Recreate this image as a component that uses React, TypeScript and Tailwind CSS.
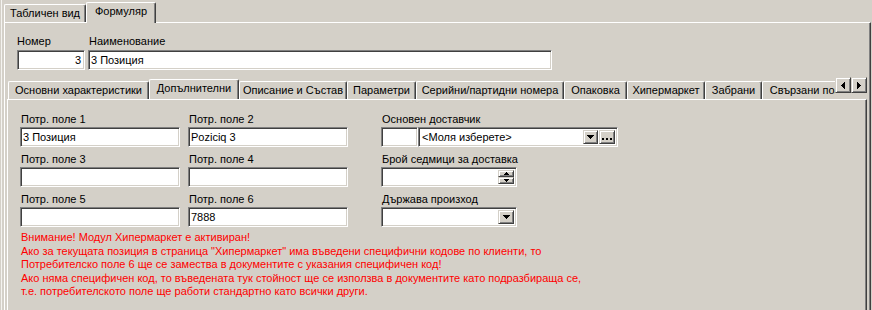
import React from "react";

const sunken =
  "border border-t-[#808080] border-l-[#808080] border-r-white border-b-white shadow-[inset_1px_1px_0_#404040,inset_-1px_-1px_0_#d4d0c8] bg-white";
const raised =
  "border border-t-[#d4d0c8] border-l-[#d4d0c8] border-r-[#404040] border-b-[#404040] shadow-[inset_1px_1px_0_#fff,inset_-1px_-1px_0_#808080] bg-[#d4d0c8]";

function DownArrow() {
  return (
    <svg width="7" height="4" viewBox="0 0 7 4" shapeRendering="crispEdges">
      <path d="M0 0h7v1h-1v1h-1v1h-1v1h-1v-1h-1v-1h-1v-1h-1z" fill="#000" />
    </svg>
  );
}

function SmallUp() {
  return (
    <svg width="5" height="3" viewBox="0 0 5 3" shapeRendering="crispEdges">
      <path d="M2 0h1v1h1v1h1v1h-5v-1h1v-1h1z" fill="#000" />
    </svg>
  );
}
function SmallDown() {
  return (
    <svg width="5" height="3" viewBox="0 0 5 3" shapeRendering="crispEdges">
      <path d="M0 0h5v1h-1v1h-1v1h-1v-1h-1v-1h-1z" fill="#000" />
    </svg>
  );
}
function LeftArrow() {
  return (
    <svg width="4" height="7" viewBox="0 0 4 7" shapeRendering="crispEdges">
      <path d="M3 0h1v7h-1v-1h-1v-1h-1v-1h-1v-1h1v-1h1v-1h1z" fill="#000" />
    </svg>
  );
}
function RightArrow() {
  return (
    <svg width="4" height="7" viewBox="0 0 4 7" shapeRendering="crispEdges">
      <path d="M0 0h1v1h1v1h1v1h1v1h-1v1h-1v1h-1v1h-1z" fill="#000" />
    </svg>
  );
}

function Label({ children, className = "" }: { children: React.ReactNode; className?: string }) {
  return <div className={"h-[13px] leading-[13px] whitespace-nowrap " + className}>{children}</div>;
}

function Input({ w, value = "", right = false }: { w: string; value?: string; right?: boolean }) {
  return (
    <div
      className={
        sunken +
        " h-[20px] mt-[1px] flex items-center whitespace-nowrap leading-[14px] " +
        w +
        (right ? " justify-end pr-[3px]" : " pl-[2px]")
      }
    >
      {value}
    </div>
  );
}

function Field({ label, value }: { label: string; value?: string }) {
  return (
    <div className="flex flex-col">
      <Label className="pl-[1px]">{label}</Label>
      <Input w="w-[160px]" value={value} />
    </div>
  );
}

const innerTabs: { label: string; w: string; selected?: boolean }[] = [
  { label: "Основни характеристики", w: "w-[141px]" },
  { label: "Допълнителни", w: "w-[90px]", selected: true },
  { label: "Описание и Състав", w: "w-[108px]" },
  { label: "Параметри", w: "w-[69px]" },
  { label: "Серийни/партидни номера", w: "w-[148px]" },
  { label: "Опаковка", w: "w-[63px]" },
  { label: "Хипермаркет", w: "w-[78px]" },
  { label: "Забрани", w: "w-[57px]" },
  { label: "Свързани позиции", w: "w-[110px]" },
];

function Tab({ label, w, selected }: { label: string; w: string; selected?: boolean }) {
  return (
    <div
      className={
        "shrink-0 flex items-center justify-center whitespace-nowrap bg-[#d4d0c8] border-l border-t border-white border-r border-r-[#404040] rounded-tl-[2px] rounded-tr-[2px] shadow-[inset_-1px_0_0_#808080] " +
        w +
        (selected
          ? " h-[21px] -mb-[1px] relative z-10 pb-[3px]"
          : " h-[18px] pb-[1px]")
      }
    >
      {label}
    </div>
  );
}

export default function App() {
  return (
    <div className="w-[872px] h-[310px] overflow-hidden bg-[#d4d0c8] flex text-[11px] text-black font-['Liberation_Sans',Arial,sans-serif]">
      <div className="w-[1px] shrink-0" />
      <div className="w-[1px] shrink-0 bg-[#f4f3f0]" />
      <div className="w-[2px] shrink-0" />
      <div className="flex flex-col w-[867px] shrink-0">
        {/* outer tab strip */}
        <div className="h-[22px] flex items-end">
          <Tab label="Табличен вид" w="w-[82px]" />
          <Tab label="Формуляр" w="w-[70px]" selected />
        </div>
        {/* outer panel */}
        <div className="flex-1 flex flex-col border-l border-t border-white border-r border-r-[#404040] shadow-[inset_-1px_0_0_#808080]">
          {/* number / name */}
          <div className="flex pl-[12px] pt-[12px] gap-[3px]">
            <div className="flex flex-col">
              <Label>Номер</Label>
              <div className="h-[1px]" />
              <Input w="w-[68px]" value="3" right />
            </div>
            <div className="flex flex-col">
              <Label className="pl-[1px]">Наименование</Label>
              <div className="h-[1px]" />
              <Input w="w-[464px]" value="3 Позиция" />
            </div>
          </div>

          {/* inner tab control */}
          <div className="mt-[7px] ml-[2px] w-[860px] flex-1 flex flex-col">
            <div className="h-[22px] flex">
              <div className="flex-1 overflow-hidden flex items-end pl-[1px]">
                {innerTabs.map((t) => (
                  <Tab key={t.label} label={t.label} w={t.w} selected={t.selected} />
                ))}
              </div>
              <div className="flex shrink-0">
                <div className={raised + " w-[16px] h-[16px] flex items-center justify-center"}>
                  <LeftArrow />
                </div>
                <div className={raised + " w-[16px] h-[16px] flex items-center justify-center"}>
                  <RightArrow />
                </div>
              </div>
            </div>
            <div className="flex-1 border-l border-t border-white border-r border-r-[#404040] shadow-[inset_-1px_0_0_#808080] pl-[12px] pt-[13px]">
              <div className="flex">
                <div className="grid grid-cols-[160px_160px] gap-x-[8px] gap-y-[6px]">
                  <Field label="Потр. поле 1" value="3 Позиция" />
                  <Field label="Потр. поле 2" value="Poziciq 3" />
                  <Field label="Потр. поле 3" />
                  <Field label="Потр. поле 4" />
                  <Field label="Потр. поле 5" />
                  <Field label="Потр. поле 6" value="7888" />
                </div>
                <div className="ml-[33px] flex flex-col gap-[6px]">
                  <div className="flex flex-col">
                    <Label className="pl-[1px]">Основен доставчик</Label>
                    <div className="flex mt-[1px]">
                      <div className={sunken + " w-[37px] h-[20px]"} />
                      <div className={sunken + " w-[200px] h-[20px] flex items-stretch p-[2px]"}>
                        <div className="flex-1 flex items-center pl-[1px] whitespace-nowrap">&lt;Моля изберете&gt;</div>
                        <div className={raised + " w-[15px] flex items-center justify-center"}>
                          <DownArrow />
                        </div>
                        <div className={raised + " w-[16px] ml-[1px] flex items-center justify-center gap-[2px]"}>
                          <span className="w-[2px] h-[2px] bg-black mt-[3px]" />
                          <span className="w-[2px] h-[2px] bg-black mt-[3px]" />
                          <span className="w-[2px] h-[2px] bg-black mt-[3px]" />
                        </div>
                      </div>
                    </div>
                  </div>
                  <div className="flex flex-col">
                    <Label className="pl-[1px]">Брой седмици за доставка</Label>
                    <div className={sunken + " mt-[1px] w-[136px] h-[20px] flex p-[2px] justify-end"}>
                      <div className="flex flex-col w-[16px]">
                        <div className={raised + " h-[8px] flex items-center justify-center"}>
                          <SmallUp />
                        </div>
                        <div className={raised + " h-[8px] flex items-center justify-center"}>
                          <SmallDown />
                        </div>
                      </div>
                    </div>
                  </div>
                  <div className="flex flex-col">
                    <Label className="pl-[1px]">Държава произход</Label>
                    <div className={sunken + " mt-[1px] w-[136px] h-[20px] flex p-[2px] justify-end"}>
                      <div className={raised + " w-[16px] flex items-center justify-center"}>
                        <DownArrow />
                      </div>
                    </div>
                  </div>
                </div>
              </div>
              <div className="mt-[4px] pl-[1px] text-[#ff0000] leading-[13.5px] whitespace-nowrap">
                <div>Внимание! Модул Хипермаркет е активиран!</div>
                <div>Ако за текущата позиция в страница "Хипермаркет" има въведени специфични кодове по клиенти, то</div>
                <div>Потребителско поле 6 ще се замества в документите с указания специфичен код!</div>
                <div>Ако няма специфичен код, то въведената тук стойност ще се използва в документите като подразбираща се,</div>
                <div>т.е. потребителското поле ще работи стандартно като всички други.</div>
              </div>
            </div>
          </div>
        </div>
      </div>
    </div>
  );
}
